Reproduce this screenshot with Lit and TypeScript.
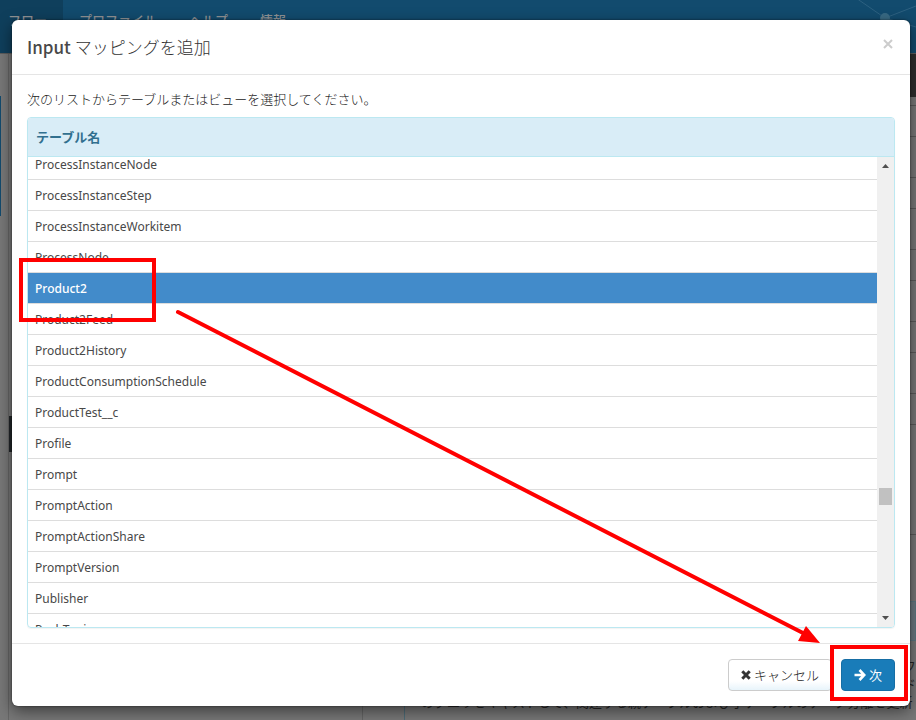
import { LitElement, html, css, svg } from "lit";
import { customElement, state, query } from "lit/decorators.js";
import { classMap } from "lit/directives/class-map.js";

const TABLES = [
  "ProcessInstanceNode",
  "ProcessInstanceStep",
  "ProcessInstanceWorkitem",
  "ProcessNode",
  "Product2",
  "Product2Feed",
  "Product2History",
  "ProductConsumptionSchedule",
  "ProductTest__c",
  "Profile",
  "Prompt",
  "PromptAction",
  "PromptActionShare",
  "PromptVersion",
  "Publisher",
  "PushTopic",
];

@customElement("app-backdrop")
export class AppBackdrop extends LitElement {
  static styles = css`
    :host {
      position: absolute;
      inset: 0;
      display: flex;
      flex-direction: column;
      overflow: hidden;
      background: #787878;
    }
    nav {
      display: flex;
      height: 54px;
      flex: none;
      box-sizing: border-box;
      background: #124b6e;
      border-bottom: 1px solid #5c5c5c;
    }
    nav a {
      padding: 10px 16px 0;
      font-size: 13px;
      line-height: 20px;
      font-weight: 500;
      color: #8f9294;
      text-decoration: none;
    }
    nav a.active {
      background: #0f3f5c;
      padding: 10px 16px 0 8px;
    }
    .network {
      margin-left: auto;
      width: 60px;
      height: 53px;
    }
    .page {
      flex: 1;
      display: flex;
      min-height: 0;
    }
    .side {
      width: 8px;
      flex: none;
      border-right: 1px solid #666;
    }
    .side .tab {
      height: 120px;
      margin-top: 42px;
      border-left: 1px solid #124b6e;
    }
    .handle {
      width: 4px;
      height: 36px;
      flex: none;
      margin-top: 362px;
      background: #222629;
    }
    .middle {
      width: 349px;
      flex: none;
      border-right: 1px solid #656565;
    }
    .main {
      flex: 1;
      min-width: 0;
      margin-left: 41px;
      border-left: 1px solid #4e6c78;
      font-size: 13px;
      line-height: 18px;
      color: #262626;
    }
    .toolbar {
      height: 43px;
      background: #2e2e2e;
    }
    .line {
      height: 40px;
      border-bottom: 1px solid #5a5a5a;
    }
    .line:nth-child(odd) {
      height: 30px;
    }
    .line.head {
      height: 8px;
    }
    .line.tall {
      height: 109px;
    }
    .info {
      height: 38px;
      margin-top: 66px;
      background: #6c7880;
      border: 1px solid #5c7680;
    }
    .help {
      margin: 16px 0 0 16px;
      white-space: nowrap;
    }
    .help span {
      display: block;
      text-align: right;
    }
  `;

  render() {
    return html`
      <nav>
        <a class="active" href="#flow">フロー</a>
        <a href="#profile">プロファイル</a>
        <a href="#help">ヘルプ</a>
        <a href="#about">情報</a>
        <svg class="network" viewBox="0 0 60 53" aria-hidden="true">
          <path d="M0 -2L29 18L60 6M29 18L60 27" fill="none" stroke="#2d6180" />
          <circle cx="29" cy="18" r="5" fill="#386a84" />
        </svg>
      </nav>
      <div class="page">
        <div class="side"><div class="tab"></div></div>
        <div class="handle"></div>
        <div class="middle"></div>
        <div class="main">
          <div class="toolbar"></div>
          <div class="line head"></div>
          ${Array.from({ length: 9 }, () => html`<div class="line"></div>`)}
          <div class="line tall"></div>
          <div class="info"></div>
          <p class="help">
            <span>フ</span>
            <span>ド</span>
            のクエリをキャストして、関連する親テーブルおよび子テーブルのデータ分離を更新
          </p>
        </div>
      </div>
    `;
  }
}

@customElement("app-root")
export class AppRoot extends LitElement {
  @state() private selected = "Product2";
  @query(".scroller") private scroller!: HTMLElement;

  static styles = css`
    :host {
      display: block;
      position: relative;
      box-sizing: border-box;
      min-height: 100vh;
      overflow: hidden;
      padding: 20px 6px 14px 12px;
      font-family: "Noto Sans CJK JP", sans-serif;
      font-size: 13px;
      line-height: 20px;
      color: #484848;
    }
    * {
      box-sizing: border-box;
    }
    .dialog {
      position: relative;
      background: #fff;
      border-radius: 6px;
      box-shadow: 0 5px 15px rgba(0, 0, 0, 0.5), 0 0 2px rgba(0, 0, 0, 0.6);
    }
    header {
      display: flex;
      align-items: center;
      justify-content: space-between;
      height: 55px;
      padding: 0 15px;
      border-bottom: 1px solid #e5e5e5;
    }
    h1 {
      margin: 0;
      font-size: 17px;
      line-height: 24px;
      font-weight: 500;
    }
    .light {
      font-weight: 300;
      color: #333;
    }
    .close {
      display: flex;
      padding: 2px;
      margin-bottom: 6px;
      border: 0;
      background: none;
    }
    .body {
      padding: 14px 15px 15px;
    }
    .intro {
      margin: 0 0 8px;
      font-weight: 300;
      color: #222;
    }
    .panel {
      border: 1px solid #bce8f1;
      border-radius: 4px;
      overflow: hidden;
      box-shadow: 0 1px 1px rgba(0, 0, 0, 0.05);
    }
    h2 {
      margin: 0;
      padding: 9px 8px;
      font-size: 13px;
      line-height: 20px;
      font-weight: 600;
      color: #31708f;
      background: #d9edf7;
      border-bottom: 1px solid #bce8f1;
    }
    .viewport {
      display: flex;
      height: 470px;
    }
    .scroller {
      flex: 1;
      overflow-y: auto;
      scrollbar-width: none;
    }
    table {
      width: 100%;
      border-collapse: separate;
      border-spacing: 0;
      font-family: "Noto Sans", "Noto Sans CJK JP", sans-serif;
      font-size: 12px;
    }
    td {
      height: 31px;
      padding: 2px 7px 0;
      border-bottom: 1px solid #ddd;
    }
    .selected td {
      color: #fff;
      font-weight: 500;
      background: #428bca;
      background-clip: padding-box;
    }
    .track {
      display: flex;
      flex-direction: column;
      align-items: center;
      width: 17px;
      background: #f0f0f0;
    }
    .thumb {
      width: 13px;
      height: 17px;
      margin: 314px 0 auto;
      background: #c1c1c1;
    }
    footer {
      display: flex;
      justify-content: flex-end;
      gap: 9px;
      padding: 15px;
      border-top: 1px solid #e5e5e5;
    }
    .button {
      display: flex;
      align-items: center;
      justify-content: center;
      gap: 3px;
      height: 32px;
      padding: 0 12px;
      border: 1px solid #ccc;
      border-radius: 4px;
      background: linear-gradient(#fff 70%, #e8f4fb);
      color: #222;
      font: 300 13px/20px "Noto Sans CJK JP", sans-serif;
    }
    .primary {
      border-color: #166ea5;
      background: #197cb9;
      color: #fff;
      font-weight: 400;
    }
    .marks {
      position: absolute;
      left: 0;
      top: 0;
      pointer-events: none;
    }
  `;

  firstUpdated() {
    this.scroller.scrollTop = 8;
  }

  render() {
    return html`
      <app-backdrop></app-backdrop>
      <section class="dialog" role="dialog" aria-labelledby="title">
        <header>
          <h1 id="title">Input <span class="light">マッピングを追加</span></h1>
          <button class="close" aria-label="閉じる">
            <svg width="10" height="10" viewBox="0 0 10 10">
              <path d="M1 1L9 9M9 1L1 9" stroke="#ccc" stroke-width="2" />
            </svg>
          </button>
        </header>
        <div class="body">
          <p class="intro">次のリストからテーブルまたはビューを選択してください。</p>
          <div class="panel">
            <h2 id="tables">テーブル名</h2>
            <div class="viewport">
              <div class="scroller">
                <table aria-labelledby="tables">
                  <tbody>
                    ${TABLES.map(
                      (name) => html`<tr
                        class=${classMap({ selected: name === this.selected })}
                        @click=${() => (this.selected = name)}
                      >
                        <td>${name}</td>
                      </tr>`
                    )}
                  </tbody>
                </table>
              </div>
              <div class="track" aria-hidden="true">
                <svg width="17" height="17" viewBox="0 0 17 17">
                  <path d="M5 11L8.5 7L12 11Z" fill="#505050" />
                </svg>
                <div class="thumb"></div>
                <svg width="17" height="17" viewBox="0 0 17 17">
                  <path d="M5 6L8.5 10L12 6Z" fill="#505050" />
                </svg>
              </div>
            </div>
          </div>
        </div>
        <footer>
          <button class="button">
            <svg width="10" height="10" viewBox="0 0 10 10">
              <path d="M1.3 1.3L8.7 8.7M8.7 1.3L1.3 8.7" stroke="#333" stroke-width="3" />
            </svg>
            キャンセル
          </button>
          <button class="button primary">
            <svg width="12" height="12" viewBox="0 0 12 12">
              <path d="M0.5 6H10M5.5 1L10.3 6L5.5 11" fill="none" stroke="#fff" stroke-width="2.6" />
            </svg>
            次
          </button>
        </footer>
      </section>
      <svg class="marks" width="916" height="720" viewBox="0 0 916 720" aria-hidden="true">
        ${svg`
          <rect x="21" y="260" width="133" height="60" fill="none" stroke="#f00" stroke-width="4" />
          <rect x="832" y="647" width="74" height="52" fill="none" stroke="#f00" stroke-width="4" />
          <path d="M178 312L803 633" stroke="#f00" stroke-width="4" stroke-linecap="round" />
          <path d="M820 643L806 626L798 641Z" fill="#f00" />
        `}
      </svg>
    `;
  }
}
